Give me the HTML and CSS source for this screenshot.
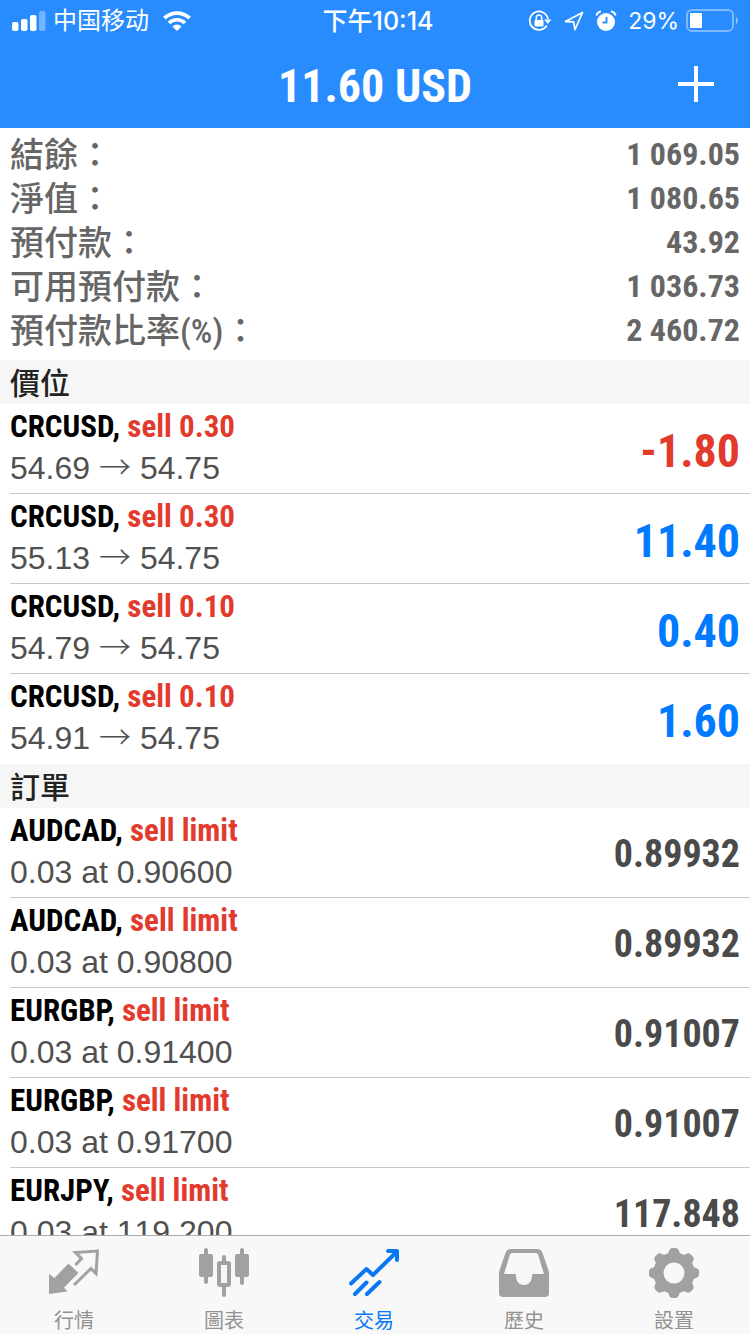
FILE: index.html
```html
<!DOCTYPE html>
<html lang="zh-Hant">
<head>
<meta charset="utf-8">
<meta name="viewport" content="width=device-width, initial-scale=1">
<title>交易</title>
<link rel="stylesheet" href="styles.css">
</head>
<body>
<header class="header">
  <div class="status">
    <div class="status-left">
      <svg class="signal" width="34" height="22" viewBox="0 0 34 22" fill="#fff" aria-hidden="true">
        <rect x="0" y="12" width="6.500" height="9" rx="2"/><rect x="9" y="9" width="6.500" height="12" rx="2"/><rect x="18" y="5" width="6.500" height="16" rx="2"/><rect x="27" y="1" width="6.500" height="20" rx="2" opacity=".35"/>
      </svg>
      <span class="carrier" lang="zh-Hans">中国移动</span>
      <svg class="wifi" width="28" height="20" viewBox="0 0 28 20" fill="none" stroke="#fff" aria-hidden="true">
        <path d="M1.400 7.200a18.200 18.200 0 0 1 25.200 0" stroke-width="3.800"/><path d="M6 12a11.600 11.600 0 0 1 16 0" stroke-width="3.600"/><path d="M14 20l-4.600-4.600a6.600 6.600 0 0 1 9.200 0z" fill="#fff" stroke="none"/>
      </svg>
    </div>
    <span class="time">下午10:14</span>
    <div class="status-right">
      <svg width="24" height="22" viewBox="0 0 24 22" fill="none" stroke="#fff" aria-hidden="true">
        <path d="M18.800 15.500A9.200 9.200 0 1 1 20 9" stroke-width="1.800"/><path d="M16 9.500h7.500l-3.700 4.500z" fill="#fff" stroke="none"/><rect x="6.500" y="10" width="9" height="6.500" rx="1" fill="#fff" stroke="none"/><path d="M8.300 10V7.700a2.700 2.700 0 0 1 5.400 0V10" stroke-width="1.600"/>
      </svg>
      <svg class="location" width="20" height="20" viewBox="0 0 20 20" fill="none" stroke="#fff" stroke-width="1.800" stroke-linejoin="round" aria-hidden="true"><path d="M18.500 1.500L1.500 10.500l8.100.400L11 18.500z"/></svg>
      <svg class="alarm" width="22" height="22" viewBox="0 0 22 22" aria-hidden="true">
        <circle cx="11" cy="12" r="9" fill="#fff"/><path d="M11.500 7v5.500H7.500" fill="none" stroke="#288cff" stroke-width="1.800"/><path d="M1.500 5.500a5 5 0 0 1 4.500-4M20.500 5.500a5 5 0 0 0-4.500-4" fill="none" stroke="#fff" stroke-width="2"/>
      </svg>
      <span class="percent">29%</span>
      <svg class="battery" width="53" height="24" viewBox="0 0 53 24" aria-hidden="true">
        <rect x="1" y="1" width="46" height="21" rx="5" fill="none" stroke="#fff" stroke-width="2" opacity=".4"/><rect x="4" y="4" width="12" height="15" rx="1" fill="#fff"/><path d="M50 8a4 4 0 0 1 0 7z" fill="#fff" opacity=".45"/>
      </svg>
    </div>
  </div>
  <div class="titlebar">
    <h1 class="title">11.60 USD</h1>
    <button class="add" type="button" aria-label="新增">
      <svg width="36" height="36" viewBox="0 0 36 36" stroke="#fff" stroke-width="4" aria-hidden="true"><path d="M0 18h36M18 0v36"/></svg>
    </button>
  </div>
</header>

<main class="content">
  <dl class="summary">
    <div class="summary-row"><dt>結餘：</dt><dd>1 069.05</dd></div>
    <div class="summary-row"><dt>淨值：</dt><dd>1 080.65</dd></div>
    <div class="summary-row"><dt>預付款：</dt><dd>43.92</dd></div>
    <div class="summary-row"><dt>可用預付款：</dt><dd>1 036.73</dd></div>
    <div class="summary-row"><dt>預付款比率(%)：</dt><dd>2 460.72</dd></div>
  </dl>

  <h2 class="section">價位</h2>
  <ul class="list">
    <li class="item"><div class="info"><p class="name">CRCUSD, <span class="side">sell 0.30</span></p><p class="detail">54.69 <span class="arrow">→</span> 54.75</p></div><span class="profit loss">-1.80</span></li>
    <li class="item"><div class="info"><p class="name">CRCUSD, <span class="side">sell 0.30</span></p><p class="detail">55.13 <span class="arrow">→</span> 54.75</p></div><span class="profit">11.40</span></li>
    <li class="item"><div class="info"><p class="name">CRCUSD, <span class="side">sell 0.10</span></p><p class="detail">54.79 <span class="arrow">→</span> 54.75</p></div><span class="profit">0.40</span></li>
    <li class="item"><div class="info"><p class="name">CRCUSD, <span class="side">sell 0.10</span></p><p class="detail">54.91 <span class="arrow">→</span> 54.75</p></div><span class="profit">1.60</span></li>
  </ul>

  <h2 class="section">訂單</h2>
  <ul class="list">
    <li class="item"><div class="info"><p class="name">AUDCAD, <span class="side">sell limit</span></p><p class="detail">0.03 at 0.90600</p></div><span class="price">0.89932</span></li>
    <li class="item"><div class="info"><p class="name">AUDCAD, <span class="side">sell limit</span></p><p class="detail">0.03 at 0.90800</p></div><span class="price">0.89932</span></li>
    <li class="item"><div class="info"><p class="name">EURGBP, <span class="side">sell limit</span></p><p class="detail">0.03 at 0.91400</p></div><span class="price">0.91007</span></li>
    <li class="item"><div class="info"><p class="name">EURGBP, <span class="side">sell limit</span></p><p class="detail">0.03 at 0.91700</p></div><span class="price">0.91007</span></li>
    <li class="item"><div class="info"><p class="name">EURJPY, <span class="side">sell limit</span></p><p class="detail">0.03 at 119.200</p></div><span class="price">117.848</span></li>
  </ul>
</main>

<nav class="tabs">
  <a class="tab" href="#quotes">
    <svg width="50" height="50" viewBox="0 0 50 50" aria-hidden="true">
      <path d="M0 26l5.500 4L18.500 16.500q1-1 2 0l8 7.500q1 1 0 2L15 39.500l3.500 4L0 46z" fill="currentColor"/>
      <path d="M25 37L42 20.500l5 5L48.500 3 26.500 4.500l6 6-6 6.500" fill="none" stroke="currentColor" stroke-width="3"/>
    </svg>
    行情
  </a>
  <a class="tab" href="#charts">
    <svg width="50" height="50" viewBox="0 0 50 50" fill="none" stroke="currentColor" aria-hidden="true">
      <path d="M7 2v32M43 2v33M25 9v6M25 39v8" stroke-width="4" stroke-linecap="round"/>
      <rect x="0" y="6" width="14" height="23" rx="2" fill="currentColor" stroke="none"/><rect x="36" y="6" width="14" height="23" rx="2" fill="currentColor" stroke="none"/>
      <rect x="20" y="15" width="10" height="22" rx="1" stroke-width="4"/>
    </svg>
    圖表
  </a>
  <a class="tab active" href="#trade" aria-current="page">
    <svg width="50" height="50" viewBox="0 0 50 50" fill="none" stroke="currentColor" stroke-width="4" stroke-linecap="round" stroke-linejoin="round" aria-hidden="true">
      <path d="M2 35.500L17.500 21l6.500 6L46 5.500M6 46l11.500-11.500M18 46l12.500-12"/><path d="M39 3h9v9"/>
    </svg>
    交易
  </a>
  <a class="tab" href="#history">
    <svg width="50" height="50" viewBox="0 0 50 50" aria-hidden="true">
      <path fill="currentColor" fill-rule="evenodd" d="M12 1h26q4 0 5.500 4L49 21q1 3 1 6v18q0 4-4 4H4q-4 0-4-4V27q0-3 1-6L6.500 5Q8 1 12 1zM12.500 5q-1 0-1.500 1.500L5 26h11q1 0 1 1c0 6.500 3 10 8 10s8-3.500 8-10q0-1 1-1h11L39 6.500Q38.500 5 37.500 5z"/>
    </svg>
    歷史
  </a>
  <a class="tab" href="#settings">
    <svg width="50" height="50" viewBox="0 0 50 50" aria-hidden="true">
      <defs><path id="tooth" d="M15.500 7.500Q19.500 6 20 3Q20.800 0 23 0h4q2.200 0 3 3Q30.500 6 34.500 7.500z" fill="currentColor"/></defs>
      <circle cx="25" cy="25" r="15.500" fill="none" stroke="currentColor" stroke-width="10"/>
      <use href="#tooth"/><use href="#tooth" transform="rotate(45 25 25)"/><use href="#tooth" transform="rotate(90 25 25)"/><use href="#tooth" transform="rotate(135 25 25)"/><use href="#tooth" transform="rotate(180 25 25)"/><use href="#tooth" transform="rotate(225 25 25)"/><use href="#tooth" transform="rotate(270 25 25)"/><use href="#tooth" transform="rotate(315 25 25)"/>
    </svg>
    設置
  </a>
</nav>
</body>
</html>
```
FILE: styles.css
```css
* {
  box-sizing: border-box;
  margin: 0;
  padding: 0;
}

body {
  display: flex;
  flex-direction: column;
  height: 100vh;
  overflow: hidden;
  background: #fff;
  color: #000;
  font-family: "Liberation Sans", "Noto Sans CJK TC", sans-serif;
}

.header {
  flex: none;
  background: #288cff;
  color: #fff;
}

.status {
  display: grid;
  grid-template-columns: 1fr auto 1fr;
  align-items: center;
  height: 40px;
  padding: 2px 12px 0;
  font: 24px/38px Inter, "Noto Sans CJK SC", sans-serif;
}

.status-left,
.status-right {
  display: flex;
  align-items: center;
}

.status-right {
  justify-content: flex-end;
}

.carrier {
  margin: 0 14px 0 7px;
}

.time {
  padding-left: 6px;
  font-size: 25px;
  font-weight: 500;
}

.location {
  margin-left: 12px;
}

.alarm {
  margin-left: 11px;
}

.percent {
  margin: 0 7px 0 11px;
  font-size: 23px;
}

.battery {
  margin-right: -1px;
}

.titlebar {
  display: grid;
  grid-template-columns: 1fr auto 1fr;
  align-items: center;
  height: 88px;
}

.title {
  grid-column: 2;
  padding-top: 4px;
  font: bold 46px/84px "Roboto Condensed", Roboto, sans-serif;
}

.add {
  display: flex;
  justify-self: end;
  padding: 8px 36px 8px 8px;
  border: 0;
  background: none;
}

.content {
  flex: 1;
  min-height: 0;
  overflow: hidden;
}

.summary {
  padding: 4px 10px 8px;
  color: #666;
}

.summary-row {
  display: flex;
  justify-content: space-between;
  height: 44px;
  font: 500 34px/46px "Roboto Condensed", "Noto Sans CJK TC", sans-serif;
}

.summary-row dd {
  font-size: 32px;
  font-weight: bold;
  line-height: 44px;
}

.section {
  padding: 0 10px 2px;
  background: #f6f6f6;
  color: #222;
  font: 500 30px/42px "Noto Sans CJK TC", sans-serif;
}

.list {
  list-style: none;
}

.item {
  display: flex;
  align-items: center;
  justify-content: space-between;
  height: 90px;
  margin-left: 10px;
  padding-right: 10px;
  border-bottom: 1px solid #c8c7cc;
}

.item:last-child {
  border-bottom-color: transparent;
}

.info {
  padding-bottom: 4px;
}

.name {
  font: bold 31px/42px "Roboto Condensed", Roboto, sans-serif;
}

.side,
.loss.profit {
  color: #e23b2e;
}

.detail {
  color: #505050;
  font-size: 32px;
  font-kerning: none;
  line-height: 40px;
}

.arrow {
  font-family: "Noto Sans CJK TC", sans-serif;
  font-weight: 300;
  line-height: 1;
}

.profit,
.price {
  padding-top: 4px;
  font: bold 46px/56px "Roboto Condensed", Roboto, sans-serif;
}

.profit {
  color: #007aff;
}

.price {
  padding-top: 2px;
  color: #4a4a4a;
  font-size: 38px;
}

.tabs {
  display: flex;
  flex: none;
  height: 99px;
  border-top: 1px solid #acacac;
  background: #f8f8f8;
}

.tab {
  display: flex;
  flex: 1;
  flex-direction: column;
  align-items: center;
  gap: 8px;
  padding: 12px 2px 0 0;
  color: #929292;
  font: 20px/28px "Noto Sans CJK TC", sans-serif;
  text-decoration: none;
}

.tab svg {
  flex: none;
  color: #a1a1a1;
}

.tab.active,
.tab.active svg {
  color: #0a78f5;
}
```
